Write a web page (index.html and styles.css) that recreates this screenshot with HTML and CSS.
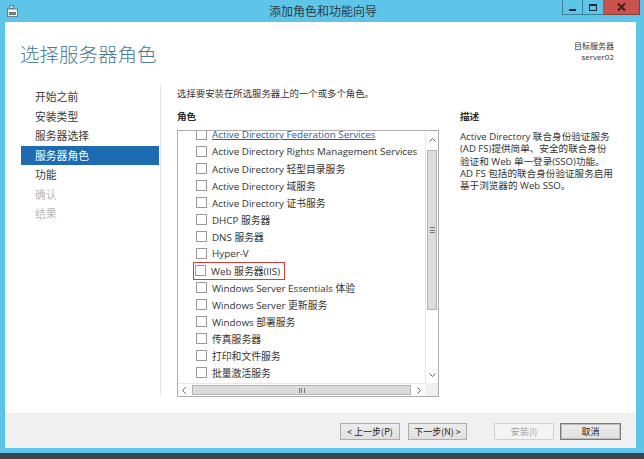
FILE: index.html
```html
<!DOCTYPE html>
<html lang="zh-CN">
<head>
<meta charset="utf-8">
<title>添加角色和功能向导</title>
<link rel="stylesheet" href="styles.css">
</head>
<body>
<div class="window">
  <div class="titlebar">
    <svg class="app-icon" width="11" height="12" viewBox="0 0 11 12">
      <rect x="3" y="0.5" width="3" height="3" fill="#f4f4f4" stroke="#5a6a75" stroke-width="0.8"/>
      <rect x="0.5" y="4" width="10" height="7.5" fill="#f2f2f2" stroke="#5a6a75" stroke-width="0.8"/>
      <rect x="2" y="7" width="7" height="3" fill="#6a7c88"/>
    </svg>
    <div class="title">添加角色和功能向导</div>
    <div class="controls">
      <div class="ctl min"><span class="min-bar"></span></div>
      <div class="ctl max"><span class="max-box"></span></div>
      <div class="ctl close">
        <svg width="9" height="8" viewBox="0 0 9 8"><path d="M1 0.5 L8 7.5 M8 0.5 L1 7.5" stroke="#3a1f1d" stroke-width="2"/></svg>
      </div>
    </div>
  </div>

  <div class="client">
    <div class="header">
      <h1 class="heading">选择服务器角色</h1>
      <div class="target">
        <div class="target-label">目标服务器</div>
        <div class="target-name">server02</div>
      </div>
    </div>

    <div class="main">
      <ul class="nav">
        <li class="nav-item">开始之前</li>
        <li class="nav-item">安装类型</li>
        <li class="nav-item">服务器选择</li>
        <li class="nav-item active">服务器角色</li>
        <li class="nav-item">功能</li>
        <li class="nav-item disabled">确认</li>
        <li class="nav-item disabled">结果</li>
      </ul>

      <div class="content">
        <p class="intro">选择要安装在所选服务器上的一个或多个角色。</p>
        <div class="columns">
          <div class="roles">
            <div class="label">角色</div>
            <div class="listbox">
              <div class="rows">
                <div class="row first selected"><span class="cb"></span><span class="txt">Active Directory Federation Services</span></div>
                <div class="row"><span class="cb"></span><span class="txt">Active Directory Rights Management Services</span></div>
                <div class="row"><span class="cb"></span><span class="txt">Active Directory 轻型目录服务</span></div>
                <div class="row"><span class="cb"></span><span class="txt">Active Directory 域服务</span></div>
                <div class="row"><span class="cb"></span><span class="txt">Active Directory 证书服务</span></div>
                <div class="row"><span class="cb"></span><span class="txt">DHCP 服务器</span></div>
                <div class="row"><span class="cb"></span><span class="txt">DNS 服务器</span></div>
                <div class="row"><span class="cb"></span><span class="txt">Hyper-V</span></div>
                <div class="row"><span class="mark"><span class="cb"></span><span class="txt">Web 服务器(IIS)</span></span></div>
                <div class="row"><span class="cb"></span><span class="txt">Windows Server Essentials 体验</span></div>
                <div class="row"><span class="cb"></span><span class="txt">Windows Server 更新服务</span></div>
                <div class="row"><span class="cb"></span><span class="txt">Windows 部署服务</span></div>
                <div class="row"><span class="cb"></span><span class="txt">传真服务器</span></div>
                <div class="row"><span class="cb"></span><span class="txt">打印和文件服务</span></div>
                <div class="row"><span class="cb"></span><span class="txt">批量激活服务</span></div>
              </div>
              <div class="vscroll">
                <div class="arrow v-arrow">
                  <svg width="7" height="4" viewBox="0 0 7 4"><path d="M0.5 3.5 L3.5 0.5 L6.5 3.5" fill="none" stroke="#606060" stroke-width="1"/></svg>
                </div>
                <div class="vtrack">
                  <div class="vthumb"><span class="grip-v"></span></div>
                </div>
                <div class="arrow v-arrow">
                  <svg width="7" height="4" viewBox="0 0 7 4"><path d="M0.5 0.5 L3.5 3.5 L6.5 0.5" fill="none" stroke="#606060" stroke-width="1"/></svg>
                </div>
              </div>
              <div class="hscroll">
                <div class="arrow h-arrow">
                  <svg width="4" height="7" viewBox="0 0 4 7"><path d="M3.5 0.5 L0.5 3.5 L3.5 6.5" fill="none" stroke="#606060" stroke-width="1"/></svg>
                </div>
                <div class="hthumb"><span class="grip-h"></span></div>
                <div class="arrow h-arrow">
                  <svg width="4" height="7" viewBox="0 0 4 7"><path d="M0.5 0.5 L3.5 3.5 L0.5 6.5" fill="none" stroke="#606060" stroke-width="1"/></svg>
                </div>
              </div>
              <div class="corner"></div>
            </div>
          </div>
          <div class="desc">
            <div class="label">描述</div>
            <p class="desc-text">Active Directory 联合身份验证服务<br>(AD FS)提供简单、安全的联合身份<br>验证和 Web 单一登录(SSO)功能。<br>AD FS 包括的联合身份验证服务启用<br>基于浏览器的 Web SSO。</p>
          </div>
        </div>
      </div>
    </div>

    <div class="footer">
      <button class="btn btn-prev">&lt; 上一步(P)</button>
      <button class="btn btn-next">下一步(N) &gt;</button>
      <button class="btn btn-install" disabled>安装(I)</button>
      <button class="btn btn-cancel">取消</button>
    </div>
  </div>
  <div class="frame-blue"></div>
  <div class="frame-dark"></div>
</div>
</body>
</html>
```

FILE: styles.css
```css
* { box-sizing: border-box; }

html, body {
  margin: 0;
  padding: 0;
  background: #ffffff;
}

body {
  font-family: "Open Sans", "Noto Sans CJK SC", sans-serif;
  color: #333333;
}

.window {
  width: 644px;
  height: 459px;
  background: #5fc5e8;
  display: flex;
  flex-direction: column;
  overflow: hidden;
}

/* ---------- Title bar ---------- */
.titlebar {
  height: 22px;
  flex: none;
  display: grid;
  grid-template-columns: 1fr auto 1fr;
  align-items: start;
}

.app-icon {
  margin: 5px 0 0 7px;
}

.title {
  font-family: "Noto Sans CJK SC", sans-serif;
  font-size: 12px;
  line-height: 22px;
  color: #2e3b44;
  padding-left: 2px;
}

.controls {
  justify-self: end;
  display: flex;
  margin-right: 4px;
  height: 15px;
}

.ctl {
  height: 15px;
  display: flex;
  align-items: center;
  justify-content: center;
}

.ctl.min, .ctl.max {
  width: 21px;
  border: 1px solid #3b7f9d;
  border-top: none;
  background: #5fc5e8;
}

.ctl.max { border-left: none; }

.min-bar {
  width: 7px;
  height: 2px;
  background: #1b2a33;
  margin-top: 5px;
}

.max-box {
  width: 8px;
  height: 7px;
  border: 1px solid #1b2a33;
  border-top-width: 2px;
}

.ctl.close {
  width: 36px;
  background: #c9524c;
  border: 1px solid #8c3b36;
  border-top: none;
  border-left: none;
}

/* ---------- Client area ---------- */
.client {
  flex: none;
  height: 426px;
  margin: 0 8px 0 5px;
  background: #ffffff;
  display: flex;
  flex-direction: column;
}

.header {
  height: 63px;
  flex: none;
  display: flex;
  justify-content: space-between;
  align-items: flex-start;
  padding: 0 22px 0 15px;
}

.heading {
  margin: 20px 0 0;
  font-family: "Noto Sans CJK SC", sans-serif;
  font-weight: 300;
  font-size: 19.5px;
  line-height: 24px;
  color: #4a7a94;
}

.target {
  margin-top: 18px;
  text-align: right;
  font-size: 8px;
  line-height: 11px;
  color: #333;
}

.target-label {
  font-family: "Noto Sans CJK SC", sans-serif;
}

.main {
  flex: 1;
  display: flex;
  min-height: 0;
}

/* ---------- Nav ---------- */
.nav {
  list-style: none;
  margin: 0 0 18px;
  padding: 2px 0 0;
  width: 156px;
  border-right: 1px solid #e2e2e2;
  flex: none;
}

.nav-item {
  margin-left: 16px;
  width: 138px;
  height: 19.5px;
  line-height: 19.5px;
  padding-left: 14px;
  font-family: "Noto Sans CJK SC", sans-serif;
  font-size: 10.8px;
  color: #3a3a3a;
}

.nav-item.active {
  background: #1c6bb3;
  color: #ffffff;
}

.nav-item.disabled {
  color: #b8b8b8;
}

/* ---------- Content ---------- */
.content {
  flex: 1;
  padding-left: 16px;
}

.intro {
  margin: 1px 0 0;
  font-family: "Noto Sans CJK SC", sans-serif;
  font-size: 9.4px;
  line-height: 14px;
  color: #333;
}

.columns {
  display: flex;
  gap: 21px;
  margin-top: 9px;
}

.label {
  font-family: "Noto Sans CJK SC", sans-serif;
  font-weight: bold;
  font-size: 9.6px;
  line-height: 14px;
  color: #2a2a2a;
}

.roles {
  width: 262px;
  flex: none;
}

.listbox {
  margin-top: 7px;
  width: 262px;
  height: 267px;
  border: 1px solid #acacac;
  display: grid;
  grid-template-columns: 1fr 13px;
  grid-template-rows: 1fr 13px;
  background: #ffffff;
}

.rows {
  overflow: hidden;
  min-width: 0;
  min-height: 0;
}

.row {
  height: 17px;
  display: flex;
  align-items: center;
  padding-left: 18px;
  white-space: nowrap;
  font-size: 9.8px;
  color: #333;
}

.row.first {
  margin-top: -5px;
}

.row.selected .txt {
  color: #1d5ea8;
  text-decoration: underline;
}

.cb {
  width: 11px;
  height: 11px;
  border: 1px solid #999999;
  background: #ffffff;
  flex: none;
}

.txt {
  margin-left: 5px;
}

.mark {
  display: flex;
  align-items: center;
  height: 18px;
  margin-left: -3px;
  padding: 0 4px 0 1px;
  border: 1.5px solid #d63a3a;
}

.vscroll {
  display: flex;
  flex-direction: column;
  background: #ffffff;
  border-left: 1px solid #e6e6e6;
}

.arrow {
  display: flex;
  align-items: center;
  justify-content: center;
  flex: none;
}

.v-arrow {
  height: 17px;
}

.vtrack {
  flex: 1;
  padding-top: 2px;
}

.vthumb {
  height: 160px;
  margin: 0 1px;
  background: #dcdcdc;
  border: 1px solid #b3b3b3;
  display: flex;
  align-items: center;
  justify-content: center;
}

.grip-v {
  width: 5px;
  height: 6px;
  border-top: 1px solid #777;
  border-bottom: 1px solid #777;
  background: linear-gradient(#777, #777) center / 5px 1px no-repeat;
}

.hscroll {
  display: flex;
  align-items: stretch;
  border-top: 1px solid #e6e6e6;
}

.h-arrow {
  width: 12px;
}

.hthumb {
  flex: 1;
  margin: 1px 2px;
  background: #dcdcdc;
  border: 1px solid #b3b3b3;
  display: flex;
  align-items: center;
  justify-content: center;
}

.grip-h {
  width: 6px;
  height: 5px;
  border-left: 1px solid #777;
  border-right: 1px solid #777;
  background: linear-gradient(#777, #777) center / 1px 5px no-repeat;
}

.corner {
  background: #f0f0f0;
}

.desc {
  width: 165px;
  flex: none;
}

.desc-text {
  margin: 8px 0 0;
  font-size: 9.6px;
  line-height: 12.3px;
  color: #333;
  white-space: nowrap;
}

/* ---------- Footer ---------- */
.footer {
  height: 35px;
  flex: none;
  background: #f0f0f0;
  display: flex;
  justify-content: flex-end;
  align-items: center;
  padding: 1px 15px 0 0;
}

.btn {
  height: 17px;
  padding: 0;
  font-family: "Noto Sans CJK SC", sans-serif;
  font-size: 9px;
  line-height: 15px;
  color: #222;
  background: linear-gradient(#ececec, #e0e0e0);
  border: 1px solid #acacac;
  border-radius: 0;
}

.btn-prev { width: 60px; }
.btn-next { width: 59px; margin-left: 8px; }
.btn-install {
  width: 60px;
  margin-left: 27px;
  background: #f4f4f4;
  border-color: #d2d2d2;
  color: #a0a0a0;
}
.btn-cancel {
  width: 61px;
  margin-left: 6px;
  border-color: #7a7a7a;
  box-shadow: inset 0 0 0 1px #bdbdbd;
}

/* ---------- Frame bottom ---------- */
.frame-blue {
  height: 5px;
  flex: none;
}

.frame-dark {
  height: 6px;
  flex: none;
  background: #384651;
}
```
